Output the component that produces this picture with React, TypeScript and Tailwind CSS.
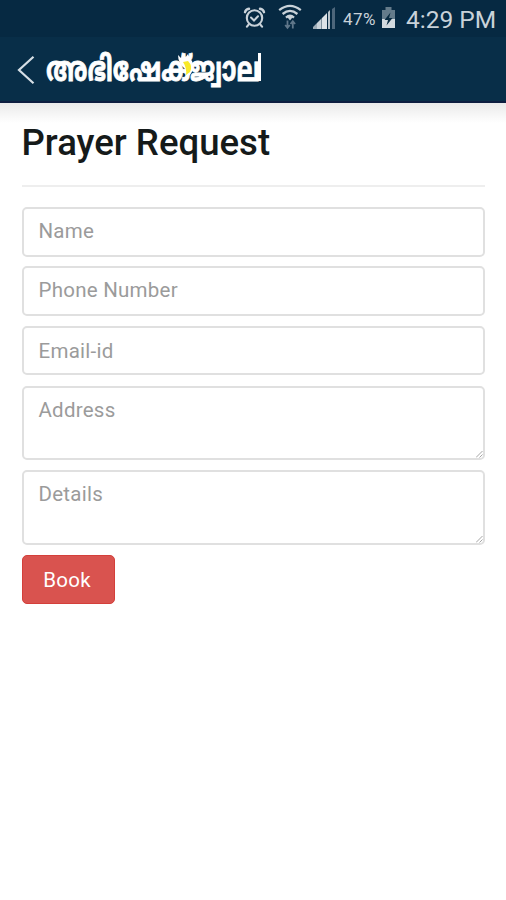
import React from "react";

function AlarmIcon() {
  return (
    <svg className="h-6 w-[23px] shrink-0" viewBox="0 0 23 24" fill="none" stroke="#c9d2d9" strokeLinecap="round">
      <circle cx="11.5" cy="12" r="7.7" strokeWidth="2.1" />
      <path d="M8 11.5l3 3 4-4.3" strokeWidth="2" />
      <path d="M2 6.2Q2.6 3.4 6 2.8M21 6.2Q20.4 3.4 17 2.8" strokeWidth="2.4" />
      <path d="M5.6 18.6l-1.6 2M17.4 18.6l1.6 2" strokeWidth="2.2" />
    </svg>
  );
}

function WifiIcon() {
  return (
    <svg className="h-7 w-6 shrink-0" viewBox="0 0 24 28" fill="none">
      <g stroke="#c9d2d9" strokeWidth="2.3">
        <path d="M1.2 7.2Q12 -1.4 22.8 7.2" />
        <path d="M4.6 11Q12 4.8 19.4 11" />
        <path d="M8 14.6Q12 11 16 14.6" />
      </g>
      <path d="M9.2 14h5.6L12 17.4z" fill="#c9d2d9" />
      <g stroke="#60778a" strokeWidth="1.8">
        <path d="M9.5 17.5v7M7.2 22l2.3 2.8 2.3-2.8" />
        <path d="M14.8 25.5v-7M12.5 21l2.3-2.8 2.3 2.8" />
      </g>
    </svg>
  );
}

function SignalIcon() {
  return (
    <svg className="h-6 w-6 shrink-0" viewBox="0 0 24 24">
      <path d="M1 23v-2l4-4v6z" fill="#9eacb7" />
      <path d="M5 23v-6l4-4v10z" fill="#c9d2d9" />
      <path d="M9 23V13l1-1v11z" fill="#7e909c" />
      <path d="M10 23V12l5-5v16z" fill="#dce2e6" />
      <path d="M16 23V6l2-2v19z" fill="#b9c3ca" />
      <path d="M20 23V3l3-2v22z" fill="#4d667b" />
    </svg>
  );
}

function BatteryIcon() {
  return (
    <svg className="h-[23px] w-[15px] shrink-0" viewBox="0 0 15 23">
      <path d="M4.5 0h6v3H14v18H1V3h3.5z" fill="#647b8a" />
      <path d="M1 12h13v9H1z" fill="#d3dadf" />
      <path d="M9.5 5.5L3.5 13H7L5.5 18.5l6-7.5H8z" fill="#092b41" />
    </svg>
  );
}

function StatusBar() {
  return (
    <div className="flex h-[37px] items-start bg-[#062942] pl-[243px] text-[#c9d2d9]">
      <div className="mt-[6px]"><AlarmIcon /></div>
      <div className="mt-[3px] ml-3"><WifiIcon /></div>
      <div className="mt-[6px] ml-[10px]"><SignalIcon /></div>
      <span className="mt-[7px] ml-[7px] w-[34px] text-[17px] leading-6 tracking-[0.5px] whitespace-nowrap">47%</span>
      <div className="mt-[7px] ml-[4px]"><BatteryIcon /></div>
      <span className="mt-[5px] ml-[10px] text-[24.5px] leading-[30px] whitespace-nowrap">4:29 PM</span>
    </div>
  );
}

function AppBar() {
  return (
    <header className="flex h-[66px] items-start border-b-2 border-[#0d1e40] bg-[#082e48]">
      <svg className="mt-[18px] ml-[17px] h-[30px] w-[18px] shrink-0" viewBox="0 0 18 30" fill="none" stroke="#d6dfe6" strokeWidth="2.2">
        <path d="M16.5 1.8L2 15l14.5 13.2" />
      </svg>
      <svg className="mt-[10px] ml-[11px] h-[44px] w-[216px] shrink-0 overflow-visible" viewBox="0 0 216 44">
        <text x="0" y="30" transform="translate(0 1.2) scale(1 1.1)" fill="#fff" stroke="#fff" strokeWidth="0.7" textLength="214" lengthAdjust="spacingAndGlyphs" className="font-['Noto_Sans_Malayalam','Noto_Sans',sans-serif] text-[31px] font-bold">അഭിഷേക്ജ്വാല</text>
        <path d="M212 6h3v28h-3z" fill="#fff" />
        <path d="M132 8l3 3 1-4 3 4 3-4q1 4 4 7 3 7-2 14l-5 3q2-5 0-9-7-6-7-14z" fill="#fff" />
        <path d="M137 15l5-1q5 5 2 11l-4 3q1-7-3-13z" fill="#f9e928" />
      </svg>
    </header>
  );
}

function Resizer() {
  return (
    <svg className="absolute right-0 bottom-0 h-[7px] w-[7px]" viewBox="0 0 7 7" stroke="#a5a5a5">
      <path d="M0 6.5L6.5 0M3.5 6.5l3-3" />
    </svg>
  );
}

const box = "relative rounded-[5px] border-2 border-[#e0e0e0] px-[15px] text-[20.5px] tracking-[0.25px] text-[#9b9b9b]";

export default function App() {
  return (
    <div className="h-[900px] w-[506px] overflow-hidden bg-white font-[Roboto,sans-serif]">
      <StatusBar />
      <AppBar />
      <main className="bg-linear-to-b from-[#eaeaea] to-white to-[20px] px-[21.5px]">
        <h1 className="h-[82px] pt-[18px] text-[36.6px] leading-[44px] font-medium whitespace-nowrap text-[#151a1a]">Prayer Request</h1>
        <hr className="border-t-2 border-[#eeeeee]" />
        <form className="mt-5 flex flex-col items-stretch">
          <div className={box + " h-[50px] leading-[45px]"}>Name</div>
          <div className={box + " mt-[9px] h-[50px] leading-[45px]"}>Phone Number</div>
          <div className={box + " mt-[10px] h-[49px] leading-[46px]"}>Email-id</div>
          <div className={box + " mt-[11px] h-[74px] pt-[7px] leading-[30px]"}>Address<Resizer /></div>
          <div className={box + " mt-[10px] h-[75px] pt-[7px] leading-[30px]"}>Details<Resizer /></div>
          <button type="button" className="mt-[10px] h-[49px] w-[93px] rounded-[5px] border border-[#d43f3a] bg-[#d9534f] pt-px pr-0.5 text-[20.5px] tracking-[0.3px] text-white">Book</button>
        </form>
      </main>
    </div>
  );
}
